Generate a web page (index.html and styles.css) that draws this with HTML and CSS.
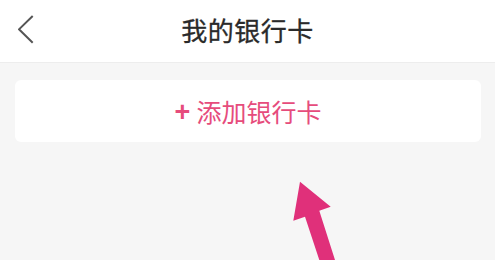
FILE: index.html
```html
<!DOCTYPE html>
<html lang="zh">
<head>
<meta charset="utf-8">
<link rel="stylesheet" href="styles.css">
</head>
<body>
<div class="page">
  <header class="header">
    <svg class="back" width="20" height="32" viewBox="0 0 20 32"><path d="M14.7 3 L1 16.3 L14.7 29.7" fill="none" stroke="#555" stroke-width="2"/></svg>
    <h1 class="title">我的银行卡</h1>
  </header>
  <main class="content">
    <div class="card"><span class="plus">+</span>添加银行卡</div>
    <svg class="arrow" width="495" height="118" viewBox="0 142 495 118">
      <polygon points="300,181.7 330.7,206.7 319.3,210.7 335,260 319.3,260 305,216.7 293.3,220.7" fill="#e0307a"/>
    </svg>
  </main>
</div>
</body>
</html>
```
FILE: styles.css
```css
* { box-sizing: border-box; }
html, body { margin: 0; padding: 0; }
body {
  width: 495px;
  height: 260px;
  overflow: hidden;
  background: #f6f6f6;
  font-family: "Noto Sans CJK SC", "Noto Sans", sans-serif;
}
.page { position: relative; height: 260px; }
.header {
  height: 63px;
  background: #fff;
  border-bottom: 1px solid #ededed;
  display: flex;
  align-items: center;
  justify-content: center;
  position: relative;
}
.back { position: absolute; left: 18px; top: 13px; }
.title {
  margin: 0;
  font-size: 26px;
  font-weight: 400;
  color: #2a2a2a;
  letter-spacing: 0.5px;
  line-height: 1;
  margin-top: -2px;
  -webkit-text-stroke: 0.3px #2a2a2a;
}
.content { padding: 17px 14px 0 15px; }
.card {
  height: 62px;
  background: #fff;
  border-radius: 6px;
  display: flex;
  align-items: center;
  justify-content: center;
  color: #e64c7c;
  font-size: 25px;
  line-height: 1;
}
.plus {
  font-family: "Liberation Sans", sans-serif;
  font-weight: 700;
  font-size: 27px;
  margin-right: 6px;
  position: relative;
  top: 1px;
}
.arrow { position: absolute; left: 0; top: 142px; }
```
